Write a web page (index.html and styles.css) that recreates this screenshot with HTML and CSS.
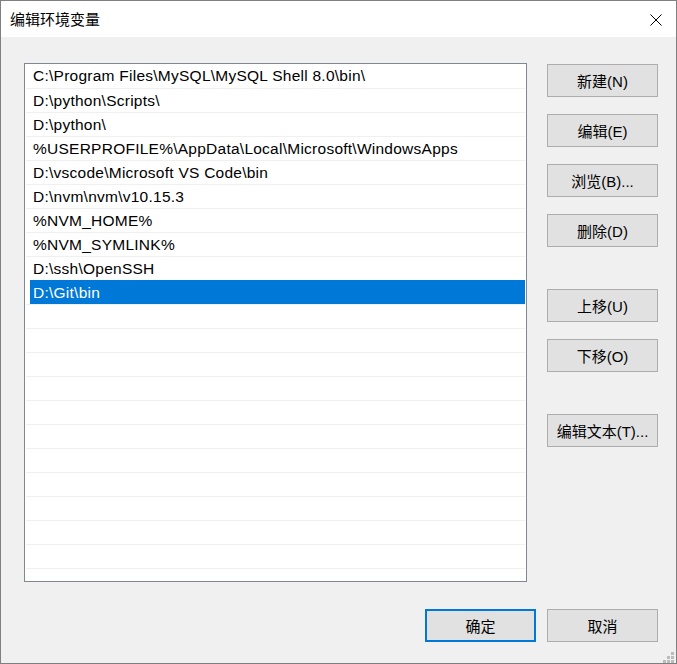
FILE: index.html
```html
<!DOCTYPE html>
<html lang="zh-CN">

<head>
    <meta charset="UTF-8">
    <meta name="viewport" content="width=device-width, initial-scale=1.0">
    <title>编辑环境变量</title>
    <link rel="stylesheet" href="styles.css">
</head>

<body>
    <div class="window">
        <div class="titlebar">
            <span class="title">编辑环境变量</span>
            <svg class="close" width="12" height="12" viewBox="0 0 12 12">
                <path d="M0.5 0.5 L11.5 11.5 M11.5 0.5 L0.5 11.5" stroke="#000" stroke-width="1" fill="none" />
            </svg>
        </div>
        <div class="main">
            <div class="path-list">
                <div class="row">C:\Program Files\MySQL\MySQL Shell 8.0\bin\</div>
                <div class="row">D:\python\Scripts\</div>
                <div class="row">D:\python\</div>
                <div class="row">%USERPROFILE%\AppData\Local\Microsoft\WindowsApps</div>
                <div class="row">D:\vscode\Microsoft VS Code\bin</div>
                <div class="row">D:\nvm\nvm\v10.15.3</div>
                <div class="row">%NVM_HOME%</div>
                <div class="row">%NVM_SYMLINK%</div>
                <div class="row">D:\ssh\OpenSSH</div>
                <div class="row selected">D:\Git\bin</div>
                <div class="row"></div>
                <div class="row"></div>
                <div class="row"></div>
                <div class="row"></div>
                <div class="row"></div>
                <div class="row"></div>
                <div class="row"></div>
                <div class="row"></div>
                <div class="row"></div>
                <div class="row"></div>
                <div class="row"></div>
                <div class="row"></div>
            </div>
            <div class="side">
                <button class="btn">新建(N)</button>
                <button class="btn">编辑(E)</button>
                <button class="btn">浏览(B)...</button>
                <button class="btn">删除(D)</button>
                <button class="btn group">上移(U)</button>
                <button class="btn">下移(O)</button>
                <button class="btn group">编辑文本(T)...</button>
            </div>
        </div>
        <div class="footer">
            <button class="btn default">确定</button>
            <button class="btn">取消</button>
        </div>
        <div class="grip">
            <i style="grid-area: 1 / 3"></i>
            <i style="grid-area: 2 / 2"></i>
            <i style="grid-area: 2 / 3"></i>
            <i style="grid-area: 3 / 1"></i>
            <i style="grid-area: 3 / 2"></i>
            <i style="grid-area: 3 / 3"></i>
        </div>
    </div>
</body>

</html>
```

FILE: styles.css
```css
body {
    margin: 0;
    font-family: "Liberation Sans", "Noto Sans CJK SC", sans-serif;
    font-size: 15px;
    color: #000;
}

.window {
    position: relative;
    box-sizing: border-box;
    width: 677px;
    height: 664px;
    border: 1px solid #7f7f7f;
    background: #f0f0f0;
    display: flex;
    flex-direction: column;
}

.titlebar {
    height: 36px;
    background: #fff;
    display: flex;
    align-items: center;
    justify-content: space-between;
    padding: 0 14px 0 9px;
    flex-shrink: 0;
}

.title {
    font-family: "Noto Sans CJK SC", sans-serif;
    font-size: 15px;
    margin-top: -1px;
}

.close {
    margin-top: 1px;
}

.main {
    display: flex;
    gap: 20px;
    padding: 26px 18px 0 23px;
}

.path-list {
    box-sizing: border-box;
    width: 503px;
    height: 519px;
    border: 1px solid #828790;
    background: #fff;
    overflow: hidden;
    padding-right: 1px;
}

.row {
    box-sizing: border-box;
    height: 24px;
    line-height: 24px;
    margin-left: 1px;
    padding-left: 7px;
    font-size: 15.5px;
    letter-spacing: 0.25px;
    white-space: nowrap;
}

.row + .row {
    border-top: 1px solid #f0f0f0;
}

.row.selected {
    background: #0078d7;
    color: #fff;
    margin-left: 5px;
    padding-left: 3px;
    border-top-color: #0078d7;
}

.side {
    display: flex;
    flex-direction: column;
    gap: 17px;
    padding-top: 1px;
}

.btn {
    font: inherit;
    box-sizing: border-box;
    width: 111px;
    height: 33px;
    padding: 0;
    background: #e1e1e1;
    border: 1px solid #adadad;
    color: #000;
    text-align: center;
}

.side .group {
    margin-top: 25px;
}

.footer {
    display: flex;
    justify-content: flex-end;
    gap: 11px;
    padding: 0 18px 0 0;
    margin-top: 27px;
}

.btn.default {
    border: 2px solid #0078d7;
}

.grip {
    position: absolute;
    right: 2px;
    bottom: 0;
    display: grid;
    grid-template-columns: repeat(3, 3px);
    grid-template-rows: repeat(3, 3px);
    gap: 1px;
}

.grip i {
    background: #bcbcbc;
}
```
